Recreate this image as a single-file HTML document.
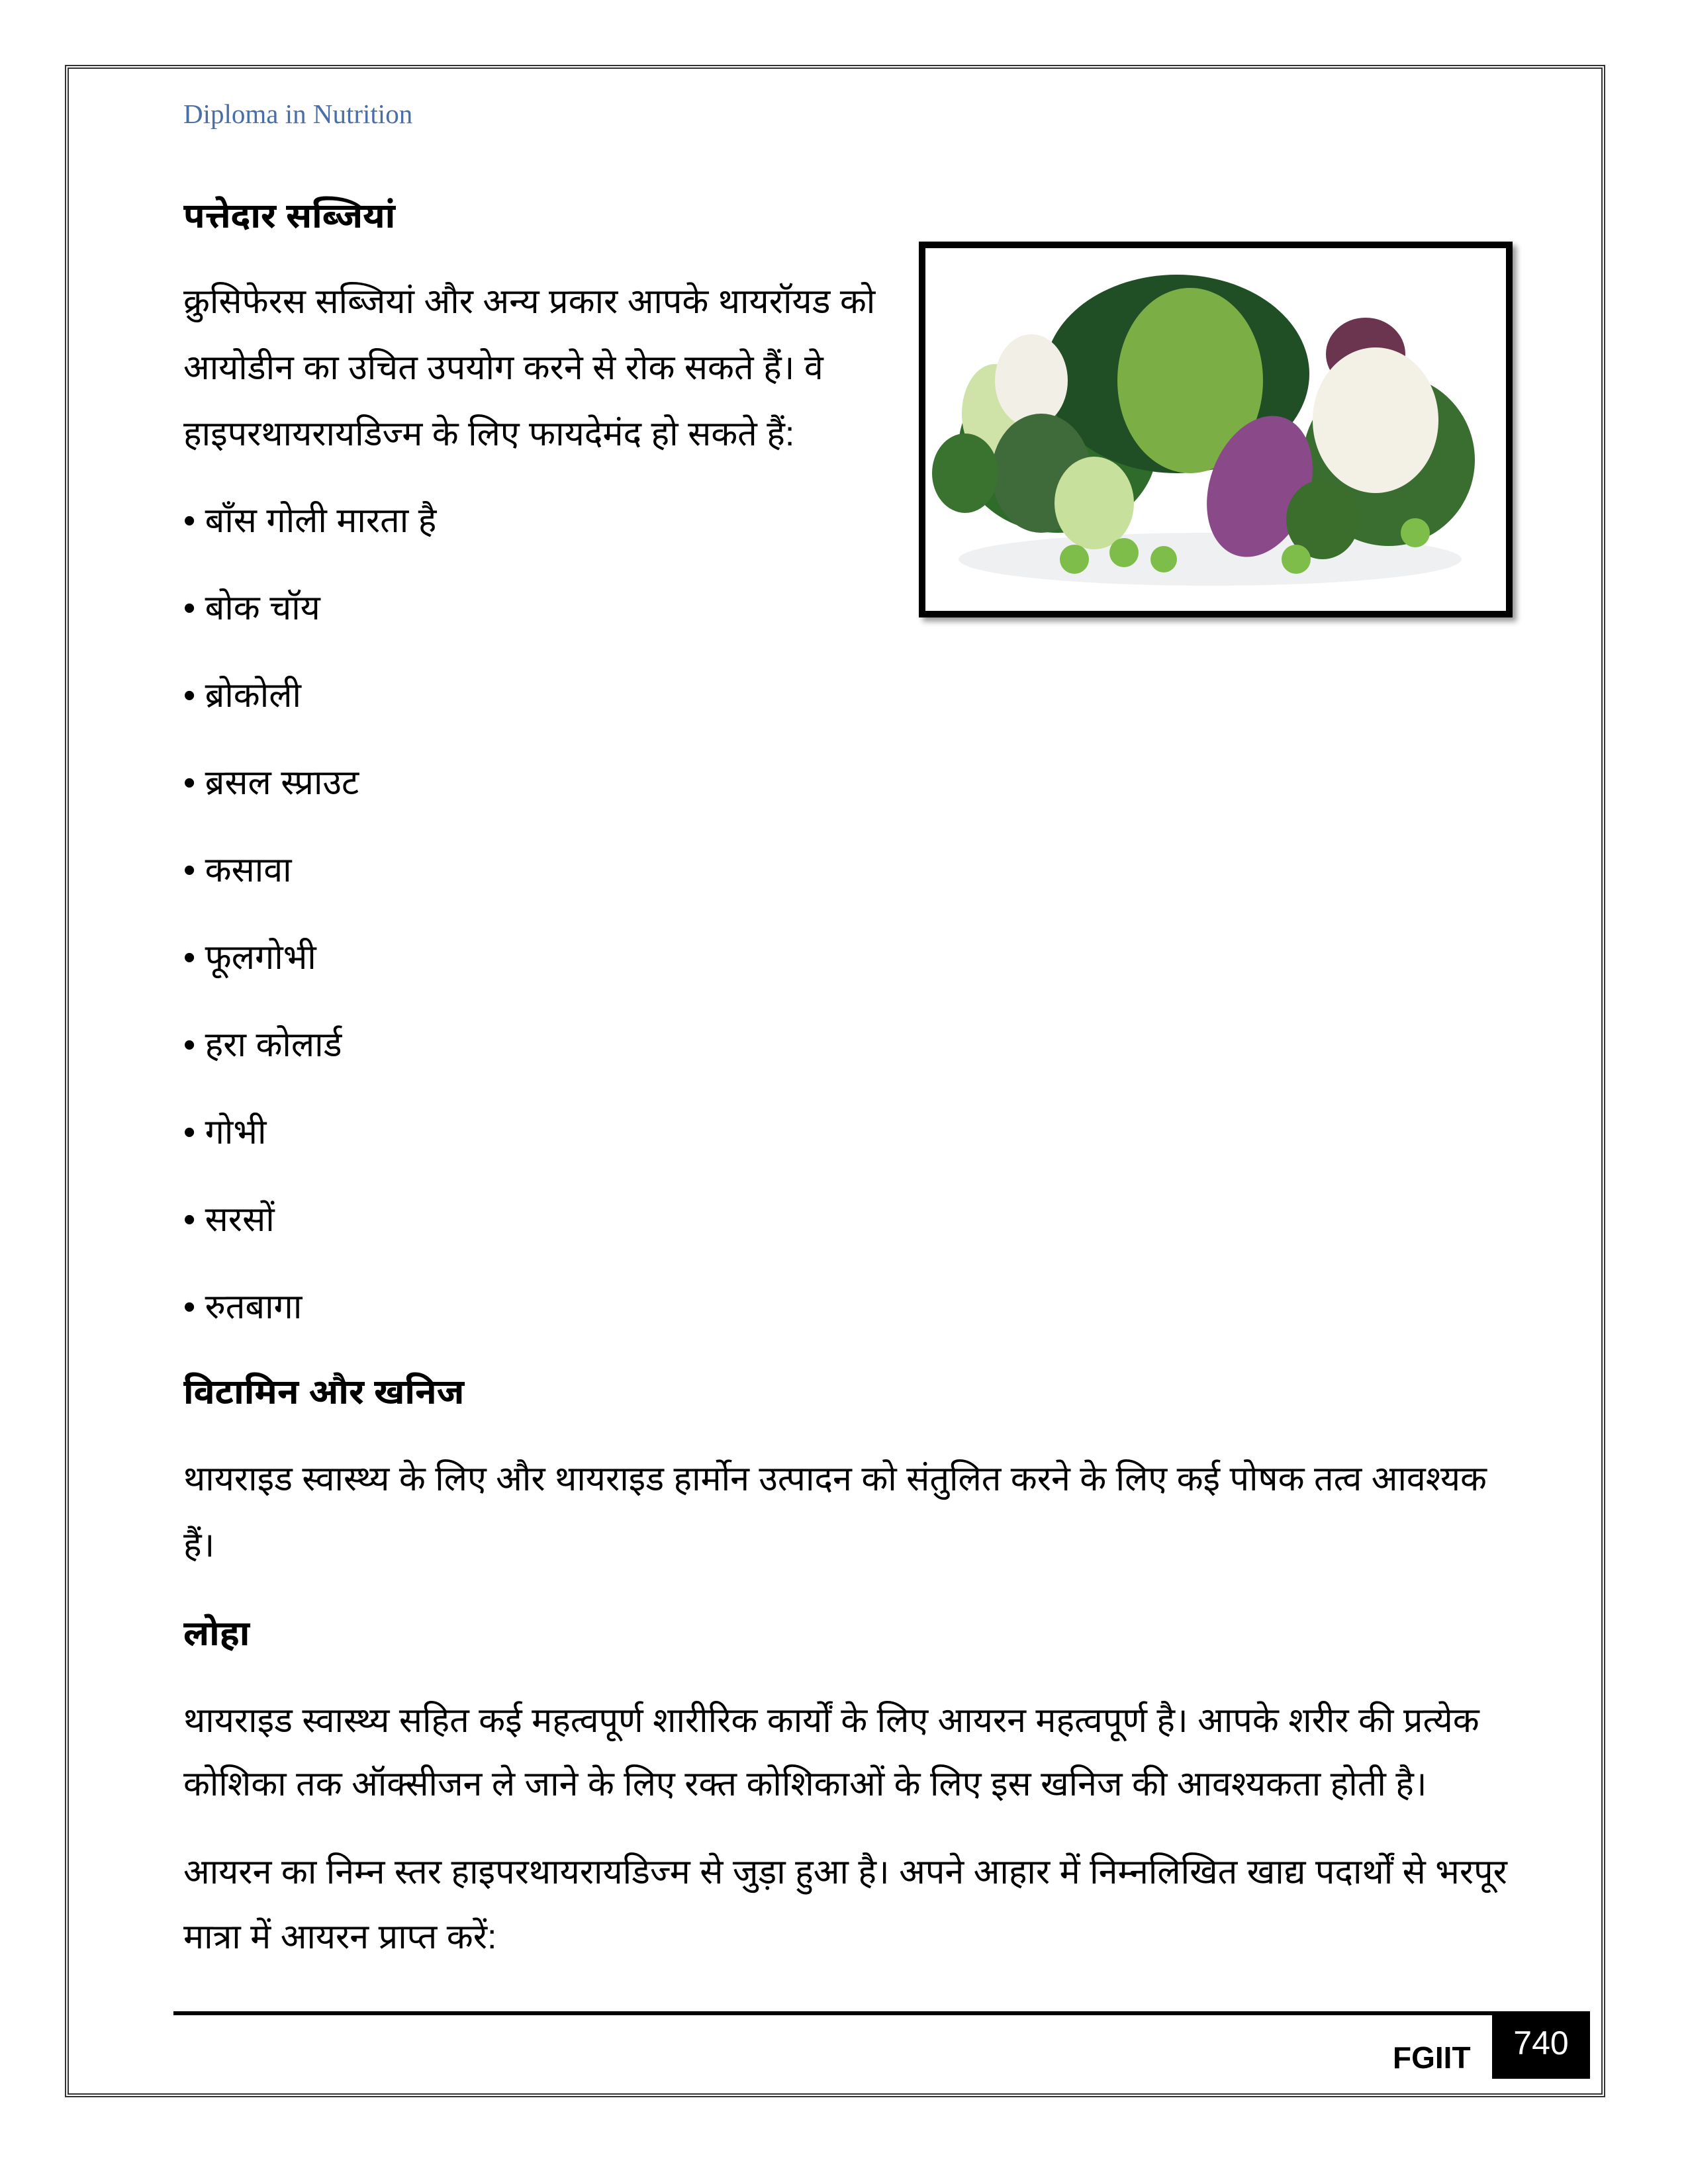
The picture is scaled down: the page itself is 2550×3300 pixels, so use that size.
<!DOCTYPE html>
<html><head><meta charset="utf-8"><style>
html,body{margin:0;padding:0;background:#fff}
#p{position:relative;width:2550px;height:3300px;overflow:hidden;font-family:"Liberation Sans","Noto Sans Devanagari","Lohit Devanagari",sans-serif;color:#000}
.l{position:absolute;left:277px;white-space:nowrap;font-size:52px;line-height:60px}
.h{font-weight:bold;font-size:53px}
</style></head><body><div id="p">
<div style="position:absolute;left:98px;top:98px;width:2327px;height:3071px;border:6px double #333;box-sizing:border-box"></div>
<div style="position:absolute;left:277px;top:148px;font-family:'Liberation Serif',serif;font-size:41px;color:#4a6ea8">Diploma in Nutrition</div>

<div class="l h" style="top:297px">पत्तेदार सब्जियां</div>
<div class="l" style="top:426px">क्रुसिफेरस सब्जियां और अन्य प्रकार आपके थायरॉयड को</div>
<div class="l" style="top:526px">आयोडीन का उचित उपयोग करने से रोक सकते हैं। वे</div>
<div class="l" style="top:626px">हाइपरथायरायडिज्म के लिए फायदेमंद हो सकते हैं:</div>
<div class="l" style="top:757px">• बाँस गोली मारता है</div>
<div class="l" style="top:889px">• बोक चॉय</div>
<div class="l" style="top:1021px">• ब्रोकोली</div>
<div class="l" style="top:1153px">• ब्रसल स्प्राउट</div>
<div class="l" style="top:1285px">• कसावा</div>
<div class="l" style="top:1417px">• फूलगोभी</div>
<div class="l" style="top:1549px">• हरा कोलार्ड</div>
<div class="l" style="top:1681px">• गोभी</div>
<div class="l" style="top:1813px">• सरसों</div>
<div class="l" style="top:1945px">• रुतबागा</div>
<div class="l h" style="top:2074px">विटामिन और खनिज</div>
<div class="l" style="top:2205px">थायराइड स्वास्थ्य के लिए और थायराइड हार्मोन उत्पादन को संतुलित करने के लिए कई पोषक तत्व आवश्यक</div>
<div class="l" style="top:2305px">हैं।</div>
<div class="l h" style="top:2439px">लोहा</div>
<div class="l" style="top:2570px">थायराइड स्वास्थ्य सहित कई महत्वपूर्ण शारीरिक कार्यों के लिए आयरन महत्वपूर्ण है। आपके शरीर की प्रत्येक</div>
<div class="l" style="top:2666px">कोशिका तक ऑक्सीजन ले जाने के लिए रक्त कोशिकाओं के लिए इस खनिज की आवश्यकता होती है।</div>
<div class="l" style="top:2799px">आयरन का निम्न स्तर हाइपरथायरायडिज्म से जुड़ा हुआ है। अपने आहार में निम्नलिखित खाद्य पदार्थों से भरपूर</div>
<div class="l" style="top:2897px">मात्रा में आयरन प्राप्त करें:</div>

<div style="position:absolute;left:1388px;top:365px;width:897px;height:568px;border:10px solid #000;box-sizing:border-box;box-shadow:6px 6px 8px #999;background:#fff;overflow:hidden">
<svg width="877" height="548" viewBox="0 0 877 548">
<ellipse cx="430" cy="470" rx="380" ry="40" fill="#eef0f2"/>
<ellipse cx="200" cy="300" rx="150" ry="130" fill="#2f6b2a"/>
<ellipse cx="380" cy="190" rx="200" ry="150" fill="#214f25"/>
<ellipse cx="700" cy="320" rx="130" ry="130" fill="#3a6e30"/>
<ellipse cx="665" cy="160" rx="60" ry="55" fill="#6b3550"/>
<ellipse cx="400" cy="200" rx="110" ry="140" fill="#7bae45"/>
<ellipse cx="105" cy="250" rx="50" ry="75" fill="#cfe3a8"/>
<ellipse cx="160" cy="200" rx="55" ry="70" fill="#f1efe6"/>
<ellipse cx="175" cy="340" rx="75" ry="90" fill="#3f6a3a"/>
<ellipse cx="60" cy="340" rx="50" ry="60" fill="#3a7230"/>
<ellipse cx="255" cy="385" rx="60" ry="70" fill="#c7e09c"/>
<ellipse cx="505" cy="360" rx="75" ry="110" fill="#8a4a8a" transform="rotate(20 505 360)"/>
<ellipse cx="680" cy="260" rx="95" ry="110" fill="#f3f0e5"/>
<ellipse cx="600" cy="410" rx="55" ry="60" fill="#3b6d2d"/>
<circle cx="225" cy="470" r="22" fill="#7fbd4a"/>
<circle cx="300" cy="460" r="22" fill="#7fbd4a"/>
<circle cx="360" cy="470" r="20" fill="#7fbd4a"/>
<circle cx="560" cy="470" r="22" fill="#7fbd4a"/>
<circle cx="740" cy="430" r="22" fill="#7fbd4a"/>
</svg></div>

<div style="position:absolute;left:262px;top:3039px;width:2140px;height:6px;background:#000"></div>
<div style="position:absolute;left:2254px;top:3039px;width:148px;height:102px;background:#000;color:#fff;font-size:50px;text-align:center;line-height:96px">740</div>
<div style="position:absolute;left:2104px;top:3082px;font-weight:bold;font-size:46px">FGIIT</div>
</div></body></html>
